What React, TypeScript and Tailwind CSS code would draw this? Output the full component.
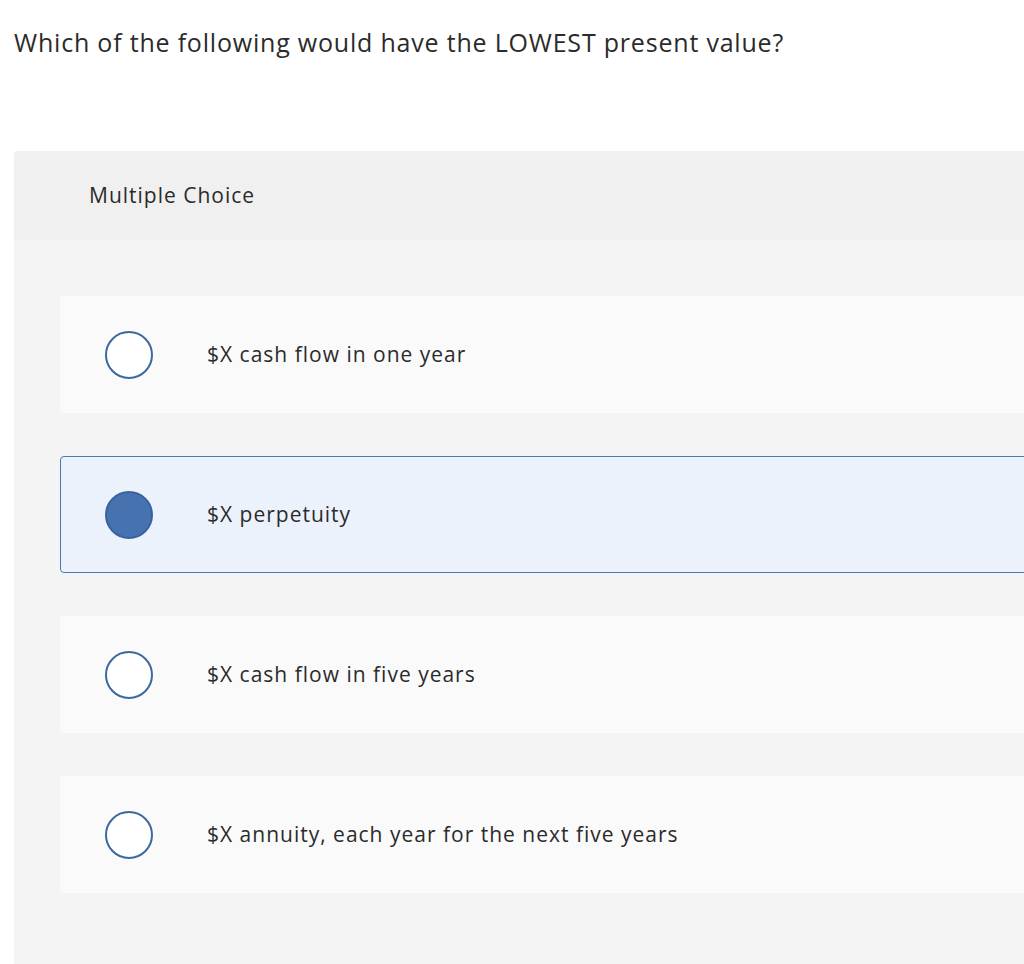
import { useState } from "react";

const options = [
  "$X cash flow in one year",
  "$X perpetuity",
  "$X cash flow in five years",
  "$X annuity, each year for the next five years",
];

export default function App() {
  const [selected, setSelected] = useState(1);

  return (
    <div
      className="w-[1024px] h-[964px] overflow-hidden bg-white text-[#2b2b2b] [font-variant-ligatures:none]"
      style={{ fontFamily: "'Open Sans', Lato, sans-serif" }}
    >
      <h1 className="pl-[14px] pt-[28px] text-[25px] leading-[28px] font-normal tracking-[0.8px]">
        Which of the following would have the LOWEST present value?
      </h1>

      <div className="ml-[14px] mt-[95px] w-[1100px] rounded-tl-[4px] overflow-hidden">
        <div className="h-[89px] bg-[#f0f0f0] pl-[75px] flex items-center text-[21px] tracking-[1px]">
          Multiple Choice
        </div>

        <div className="bg-[#f4f4f4] pt-[56px] pl-[46px] pb-[80px] flex flex-col gap-[43px]">
          {options.map((opt, i) => {
            const active = i === selected;
            return (
              <button
                key={opt}
                onClick={() => setSelected(i)}
                className={
                  active
                    ? "h-[117px] flex items-center pl-[44px] rounded-[4px] border border-[#4a78b8] bg-[#ebf2fb] text-left"
                    : "h-[117px] flex items-center pl-[45px] rounded-[4px] bg-[#fafafa] text-left"
                }
              >
                <span
                  className={
                    active
                      ? "w-[48px] h-[48px] rounded-full bg-[#4672b0] border-2 border-[#3a62a0] shrink-0"
                      : "w-[48px] h-[48px] rounded-full bg-white border-2 border-[#3c679f] shrink-0"
                  }
                />
                <span className="ml-[54px] text-[21px] tracking-[1px]">{opt}</span>
              </button>
            );
          })}
        </div>
      </div>
    </div>
  );
}
